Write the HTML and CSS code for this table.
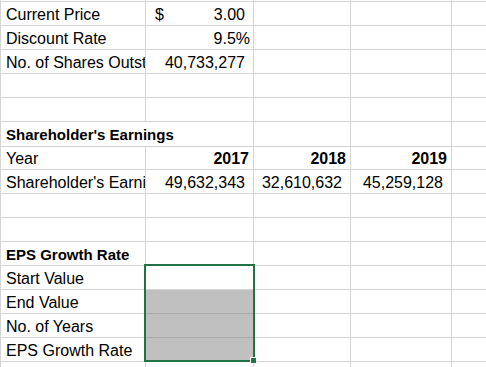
FILE: index.html
```html
<!DOCTYPE html>
<html>
<head>
<meta charset="utf-8">
<link rel="stylesheet" href="styles.css">
</head>
<body>
<div class="sheet">
  <div class="row strip"><div class="c"></div><div class="c"></div><div class="c"></div><div class="c"></div><div class="c"></div></div>
  <div class="row"><div class="c">Current Price</div><div class="c acct"><span>$</span><span>3.00</span></div><div class="c"></div><div class="c"></div><div class="c"></div></div>
  <div class="row"><div class="c">Discount Rate</div><div class="c num">9.5%</div><div class="c"></div><div class="c"></div><div class="c"></div></div>
  <div class="row"><div class="c">No. of Shares Outstanding</div><div class="c num pad">40,733,277</div><div class="c"></div><div class="c"></div><div class="c"></div></div>
  <div class="row"><div class="c"></div><div class="c"></div><div class="c"></div><div class="c"></div><div class="c"></div></div>
  <div class="row"><div class="c"></div><div class="c"></div><div class="c"></div><div class="c"></div><div class="c"></div></div>
  <div class="row"><div class="c over b">Shareholder's Earnings</div><div class="c"></div><div class="c"></div><div class="c"></div><div class="c"></div></div>
  <div class="row"><div class="c">Year</div><div class="c num b yr">2017</div><div class="c num b yr">2018</div><div class="c num b yr">2019</div><div class="c"></div></div>
  <div class="row"><div class="c">Shareholder's Earnings</div><div class="c num pad">49,632,343</div><div class="c num pad">32,610,632</div><div class="c num pad">45,259,128</div><div class="c"></div></div>
  <div class="row"><div class="c"></div><div class="c"></div><div class="c"></div><div class="c"></div><div class="c"></div></div>
  <div class="row"><div class="c"></div><div class="c"></div><div class="c"></div><div class="c"></div><div class="c"></div></div>
  <div class="row"><div class="c b">EPS Growth Rate</div><div class="c"></div><div class="c"></div><div class="c"></div><div class="c"></div></div>
  <div class="row"><div class="c">Start Value</div><div class="c"></div><div class="c"></div><div class="c"></div><div class="c"></div></div>
  <div class="row"><div class="c">End Value</div><div class="c fill"></div><div class="c"></div><div class="c"></div><div class="c"></div></div>
  <div class="row"><div class="c">No. of Years</div><div class="c fill"></div><div class="c"></div><div class="c"></div><div class="c"></div></div>
  <div class="row"><div class="c">EPS Growth Rate</div><div class="c fill"></div><div class="c"></div><div class="c"></div><div class="c"></div></div>
  <div class="row"><div class="c"></div><div class="c"></div><div class="c"></div><div class="c"></div><div class="c"></div></div>
  <div class="selection"><div class="handle"></div></div>
</div>
</body>
</html>
```
FILE: styles.css
```css
html, body {
  margin: 0;
  padding: 0;
  background: #ffffff;
  overflow: hidden;
}
.sheet {
  position: relative;
  width: 486px;
  height: 367px;
  overflow: hidden;
  border-left: 1px solid #d4d4d4;
  box-sizing: border-box;
  font-family: "Liberation Sans", Arial, sans-serif;
  font-size: 16px;
  color: #000;
}
.row {
  display: grid;
  grid-template-columns: 145px 108px 97px 101px 40px;
  height: 24px;
}
.row.strip {
  height: 2px;
}
.c {
  box-sizing: border-box;
  border-right: 1px solid #d4d4d4;
  border-bottom: 1px solid #d4d4d4;
  padding: 1px 3px 0 5px;
  line-height: 23px;
  white-space: nowrap;
  overflow: hidden;
}
.c.over {
  overflow: visible;
  border-right-color: transparent;
  position: relative;
  z-index: 1;
}
.b {
  font-weight: bold;
  font-size: 15px;
}
.b.yr {
  font-size: 16px;
  padding-right: 4px;
}
.num {
  text-align: right;
}
.num.pad {
  padding-right: 8px;
}
.acct {
  display: flex;
  justify-content: space-between;
  padding-left: 9px;
  padding-right: 8px;
}
.fill {
  background: #c0c0c0;
  border-bottom-color: #a9a9a9;
}
.selection {
  position: absolute;
  left: 143px;
  top: 264px;
  width: 111px;
  height: 98px;
  box-sizing: border-box;
  border: 2px solid #217346;
  z-index: 2;
}
.handle {
  position: absolute;
  right: -4px;
  bottom: -4px;
  width: 5px;
  height: 5px;
  background: #217346;
  border: 1px solid #ffffff;
}
```
